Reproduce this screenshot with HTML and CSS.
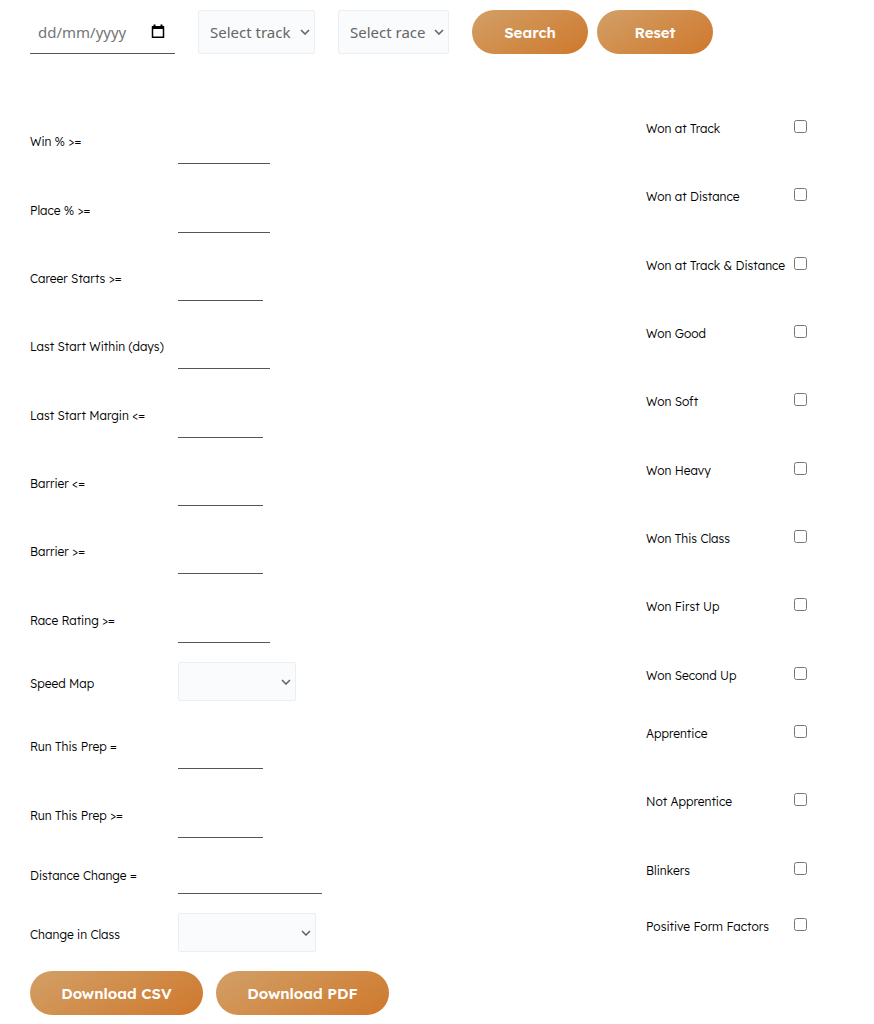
FILE: index.html
```html
<!DOCTYPE html>
<html lang="en-au">

<head>
    <meta charset="utf-8">
    <meta name="viewport" content="width=device-width, initial-scale=1">
    <title>Race Search</title>
    <link rel="stylesheet" href="styles.css">
</head>

<body>
    <form class="search">
        <!-- date, track and race -->
        <div class="topbar">
            <div class="date">
                <input type="text" class="date-input" id="date" placeholder="dd/mm/yyyy" aria-label="Date">
                <button type="button" class="date-button" aria-label="Open calendar">
                    <svg width="14" height="15" viewBox="0 0 14 15">
                        <path d="M1.5 3h11v10.2h-11z" fill="none" stroke="#000" stroke-width="1.5"/>
                        <path d="M1 2h12v3H1zM2.5 0.5h2V3h-2zM9.5 0.5h2V3h-2z" fill="#000"/>
                    </svg>
                </button>
            </div>
            <select class="select select-track" id="track" aria-label="Track"><option>Select track</option></select>
            <select class="select select-race" id="race" aria-label="Race"><option>Select race</option></select>
            <div class="actions">
                <button type="button" class="button">Search</button>
                <button type="reset" class="button">Reset</button>
            </div>
        </div>

        <!-- filters -->
        <div class="filters">
            <div class="row">
                <label for="win">Win % &gt;=</label>
                <input type="text" class="line medium" id="win">
                <label class="check-label" for="won-track">Won at Track</label>
                <input type="checkbox" class="check" id="won-track">
            </div>
            <div class="row">
                <label for="place">Place % &gt;=</label>
                <input type="text" class="line medium" id="place">
                <label class="check-label" for="won-distance">Won at Distance</label>
                <input type="checkbox" class="check" id="won-distance">
            </div>
            <div class="row">
                <label for="starts">Career Starts &gt;=</label>
                <input type="text" class="line" id="starts">
                <label class="check-label" for="won-both">Won at Track &amp; Distance</label>
                <input type="checkbox" class="check" id="won-both">
            </div>
            <div class="row">
                <label for="last-start">Last Start Within (days)</label>
                <input type="text" class="line medium" id="last-start">
                <label class="check-label" for="won-good">Won Good</label>
                <input type="checkbox" class="check" id="won-good">
            </div>
            <div class="row">
                <label for="margin">Last Start Margin &lt;=</label>
                <input type="text" class="line" id="margin">
                <label class="check-label" for="won-soft">Won Soft</label>
                <input type="checkbox" class="check" id="won-soft">
            </div>
            <div class="row">
                <label for="barrier-max">Barrier &lt;=</label>
                <input type="text" class="line" id="barrier-max">
                <label class="check-label" for="won-heavy">Won Heavy</label>
                <input type="checkbox" class="check" id="won-heavy">
            </div>
            <div class="row">
                <label for="barrier-min">Barrier &gt;=</label>
                <input type="text" class="line" id="barrier-min">
                <label class="check-label" for="won-class">Won This Class</label>
                <input type="checkbox" class="check" id="won-class">
            </div>
            <div class="row">
                <label for="rating">Race Rating &gt;=</label>
                <input type="text" class="line medium" id="rating">
                <label class="check-label" for="won-first">Won First Up</label>
                <input type="checkbox" class="check" id="won-first">
            </div>
            <div class="row row-select">
                <label for="speed-map">Speed Map</label>
                <select class="select select-speed" id="speed-map"><option></option></select>
                <label class="check-label" for="won-second">Won Second Up</label>
                <input type="checkbox" class="check" id="won-second">
            </div>
            <div class="row">
                <label for="prep">Run This Prep =</label>
                <input type="text" class="line" id="prep">
                <label class="check-label" for="apprentice">Apprentice</label>
                <input type="checkbox" class="check" id="apprentice">
            </div>
            <div class="row">
                <label for="prep-min">Run This Prep &gt;=</label>
                <input type="text" class="line" id="prep-min">
                <label class="check-label" for="not-apprentice">Not Apprentice</label>
                <input type="checkbox" class="check" id="not-apprentice">
            </div>
            <div class="row row-text">
                <label for="distance">Distance Change =</label>
                <input type="text" class="line long" id="distance">
                <label class="check-label" for="blinkers">Blinkers</label>
                <input type="checkbox" class="check" id="blinkers">
            </div>
            <div class="row row-select">
                <label for="class-change">Change in Class</label>
                <select class="select select-class" id="class-change"><option></option></select>
                <label class="check-label" for="form-factors">Positive Form Factors</label>
                <input type="checkbox" class="check" id="form-factors">
            </div>
        </div>

        <div class="downloads">
            <button type="button" class="button button-wide">Download CSV</button>
            <button type="button" class="button button-wide">Download PDF</button>
        </div>
    </form>
</body>
</html>
```
FILE: styles.css
```css
* {
    box-sizing: border-box;
}

body {
    margin: 0;
    background: white;
    color: #000;
    font-family: Lexend, "Lexend Deca", Inter, sans-serif;
    font-size: 12px;
    font-weight: 300;
    line-height: 18px;
}

.search {
    padding: 10px 30px 9px;
}

input,
select,
button {
    margin: 0;
    font-family: inherit;
}

.topbar {
    display: flex;
    flex-wrap: wrap;
    gap: 23px;
    margin-bottom: 52px;
}

.date {
    display: flex;
    align-items: center;
    width: 145px;
    height: 44px;
    padding: 0 10px 0 8px;
    border-bottom: 1px solid #555;
}

.date-input {
    flex: 1;
    min-width: 0;
    padding: 0;
    border: none;
    outline: none;
    background: none;
    font-family: "Noto Sans", sans-serif;
    font-size: 15px;
}

.date-input::placeholder {
    color: #757575;
}

.date-button {
    display: flex;
    padding: 0;
    border: none;
    background: none;
}

.select {
    appearance: none;
    height: 39px;
    padding: 0 18px 0 11px;
    border: 1px solid #eaeff3;
    border-radius: 2px;
    background: #fafbfd url("data:image/svg+xml,%3Csvg xmlns='http://www.w3.org/2000/svg' width='10' height='6'%3E%3Cpath d='M1 1l4 4 4-4' fill='none' stroke='%23666' stroke-width='1.6'/%3E%3C/svg%3E") no-repeat right 4px center;
    color: #666;
    font-family: "Noto Sans", sans-serif;
    font-size: 15px;
}

.topbar .select {
    height: 44px;
}

.select-track {
    width: 117px;
}

.select-race {
    width: 111px;
}

.select-speed {
    width: 118px;
}

.select-class {
    width: 138px;
}

.actions {
    display: flex;
    gap: 9px;
}

.button {
    width: 116px;
    height: 44px;
    padding: 0;
    border: none;
    border-radius: 22px;
    background: linear-gradient(150deg, #d2a067, #cf782c);
    color: white;
    font-size: 15px;
    font-weight: 600;
}

.button-wide {
    width: 173px;
}

.row {
    display: grid;
    grid-template-columns: 148px 1fr 148px 50px;
    align-items: center;
    min-height: 68px;
}

.row:nth-child(3n+2) {
    min-height: 69px;
}

.row.row-select {
    min-height: 58px;
}

.row.row-text {
    min-height: 56px;
}

.row label {
    padding-top: 4px;
}

.row-text label {
    padding-top: 0;
}

.row .check-label {
    align-self: start;
    padding-top: 14px;
}

.check {
    align-self: start;
    width: 13px;
    height: 13px;
    margin-top: 14px;
}

.line,
.row .select {
    align-self: end;
    margin-bottom: 10px;
}

.line {
    width: 85px;
    height: 34px;
    padding: 0 8px;
    border: none;
    border-bottom: 1px solid #555;
    background: none;
    font-size: 15px;
}

.medium {
    width: 92px;
}

.long {
    width: 144px;
}

.downloads {
    display: flex;
    gap: 13px;
    padding-top: 9px;
}
```
